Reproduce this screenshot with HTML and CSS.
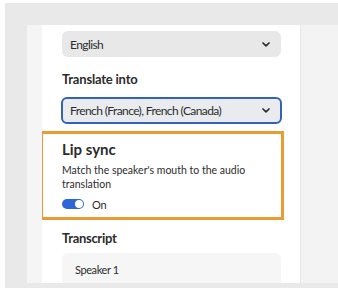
FILE: index.html
```html
<!DOCTYPE html>
<html>
  <head>
    <title>Translate settings</title>
    <link rel="stylesheet" href="styles.css">
  </head>
  <body>
    <div class="frame">
      <div class="panel">
        <div class="rail"></div>
        <div class="card">
          <div class="select">
            <span>English</span>
            <svg class="chevron" width="8" height="5" viewBox="0 0 8 5"><path d="M1 1 L4 3.9 L7 1" fill="none" stroke="#2c2c2c" stroke-width="1.7" stroke-linecap="round" stroke-linejoin="round"/></svg>
          </div>

          <h2 class="label label-first">Translate into</h2>
          <div class="select select-active">
            <span>French (France), French (Canada)</span>
            <svg class="chevron" width="8" height="5" viewBox="0 0 8 5"><path d="M1 1 L4 3.9 L7 1" fill="none" stroke="#2c2c2c" stroke-width="1.7" stroke-linecap="round" stroke-linejoin="round"/></svg>
          </div>

          <div class="lipsync">
            <h1>Lip sync</h1>
            <p>Match the speaker's mouth to the audio translation</p>
            <div class="toggle-row">
              <span class="toggle"><span class="knob"></span></span>
              <span>On</span>
            </div>
          </div>

          <h2 class="label label-second">Transcript</h2>
          <div class="transcript">
            <span>Speaker 1</span>
          </div>
        </div>
        <div class="side"></div>
      </div>
    </div>
  </body>
</html>
```

FILE: styles.css
```css
body {
  margin: 0;
  background-color: #fff;
  font-family: Lato, "Open Sans", sans-serif;
  color: #2c2c2c;
}

.frame {
  margin: 3px 0 0 5px;
  height: 285px;
  background-color: #e9e9e9;
  padding: 22px 0 0 22px;
  box-sizing: border-box;
  overflow: hidden;
}

.panel {
  display: flex;
  height: 258px;
}

.rail {
  width: 15px;
  background-color: #f5f5f5;
}

.card {
  width: 258px;
  background-color: #fff;
  padding: 6px 19px 0 20px;
  box-sizing: border-box;
  overflow: hidden;
}

.side {
  flex: 1;
  background-color: #f3f3f3;
  border-left: 1px solid #e8e8e8;
}

.select {
  display: flex;
  align-items: center;
  justify-content: space-between;
  height: 26px;
  padding: 0 11px 0 8px;
  background-color: #e8e8e8;
  border-radius: 6px;
  font-size: 12px;
  letter-spacing: -0.6px;
}

.select-active {
  height: 27px;
  margin-left: -1px;
  margin-right: -1px;
  padding-left: 7px;
  padding-right: 10px;
  background-color: #e9ebef;
  border: 2px solid #3363b5;
  box-sizing: border-box;
}

.label {
  font-size: 13px;
  line-height: 16px;
  font-weight: bold;
  letter-spacing: -0.2px;
}

.label-first {
  margin: 14px 0 10px;
}

.label-second {
  margin: 10px 0 7px;
  letter-spacing: -0.3px;
}

.lipsync {
  margin: 7px -3px 0 -22px;
  padding: 6px 19px 8px 19px;
  border: 3px solid #e89c33;
}

.lipsync h1 {
  margin: 0;
  font-size: 15px;
  line-height: 18px;
  font-weight: bold;
}

.lipsync p {
  margin: 5px 0 8px;
  font-size: 10.5px;
  line-height: 14px;
}

.toggle-row {
  display: flex;
  align-items: center;
  gap: 8px;
  height: 10px;
  font-size: 11px;
  letter-spacing: -0.3px;
}

.toggle {
  display: flex;
  align-items: center;
  justify-content: flex-end;
  width: 22px;
  height: 10px;
  padding: 0 1px;
  box-sizing: border-box;
  background-color: #2b67d9;
  border-radius: 5px;
}

.knob {
  width: 8px;
  height: 8px;
  background-color: #fff;
  border-radius: 50%;
}

.transcript {
  height: 40px;
  padding: 10px 13px 0;
  box-sizing: border-box;
  background-color: #f6f6f6;
  border-radius: 6px;
  font-size: 11px;
  line-height: 13px;
  letter-spacing: -0.4px;
}
```
